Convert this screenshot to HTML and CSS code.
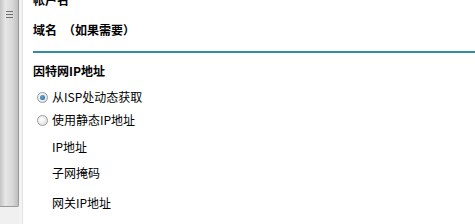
FILE: index.html
```html
<!DOCTYPE html>
<html lang="zh-CN">
<head>
    <meta charset="UTF-8">
    <title>WAN 设置</title>
    <link rel="stylesheet" href="styles.css">
</head>
<body>
    <div class="page">
        <div class="scrollbar">
            <div class="thumb">
                <div class="grip"></div>
            </div>
            <div class="track"></div>
        </div>
        <div class="gutter"></div>

        <div class="content">
            <div class="row label-bold">帐户名</div>
            <div class="row label-bold domain">域名　（如果需要）</div>
            <div class="divider"></div>

            <div class="row label-bold section">因特网IP地址</div>

            <label class="row radio-row first">
                <span class="radio checked"></span>
                <span>从ISP处动态获取</span>
            </label>
            <label class="row radio-row second">
                <span class="radio"></span>
                <span>使用静态IP地址</span>
            </label>

            <div class="row field f-ip">IP地址</div>
            <div class="row field f-mask">子网掩码</div>
            <div class="row field f-gw">网关IP地址</div>
        </div>
    </div>
</body>
</html>
```

FILE: styles.css
```css
* {
    margin: 0;
    padding: 0;
    box-sizing: border-box;
}

body {
    background: #ffffff;
    font-family: "Noto Sans CJK SC", "Liberation Sans", sans-serif;
    font-size: 12px;
    color: #000000;
    overflow: hidden;
    height: 224px;
}

.page {
    display: flex;
    height: 224px;
}

.scrollbar {
    width: 19px;
    display: flex;
    flex-direction: column;
}

.thumb {
    height: 207px;
    background: linear-gradient(to right, #c4c4c4 0%, #e6e6e6 30%, #d8d8d8 70%, #bdbdbd 100%);
    border-right: 1px solid #9a9a9a;
    border-bottom: 1px solid #9a9a9a;
    border-bottom-right-radius: 2px;
    padding-top: 11px;
    padding-left: 6px;
}

.grip {
    width: 7px;
    height: 7px;
    background: repeating-linear-gradient(to bottom, #707070 0, #707070 1px, transparent 1px, transparent 3px);
}

.track {
    flex: 1;
    background: #f0f0f0;
}

.gutter {
    width: 4px;
    background: #f3f3f3;
    border-right: 1px solid #e2e2e2;
}

.content {
    flex: 1;
    padding-left: 10px;
    margin-top: -10px;
}

.row {
    height: 20px;
    line-height: 20px;
    white-space: nowrap;
}

.label-bold {
    font-weight: bold;
}

.domain {
    margin-top: 10px;
}

.divider {
    height: 2px;
    background: #2f8ea6;
    margin-top: 11px;
}

.section {
    margin-top: 8px;
}

.radio-row {
    display: flex;
    align-items: center;
    padding-left: 4px;
}

.radio-row.first {
    margin-top: 6px;
}

.radio-row.second {
    margin-top: 3px;
}

.radio {
    width: 11px;
    height: 11px;
    border-radius: 50%;
    border: 1px solid #9c9c9c;
    background: radial-gradient(circle at 40% 40%, #ffffff 0%, #e4e4e4 70%, #cfcfcf 100%);
    margin-right: 4px;
    position: relative;
}

.radio.checked::after {
    content: "";
    position: absolute;
    left: 2px;
    top: 2px;
    width: 5px;
    height: 5px;
    border-radius: 50%;
    background: radial-gradient(circle at 40% 40%, #5fa8d8 0%, #1d5f9a 100%);
}

.field {
    padding-left: 19px;
}

.f-ip {
    margin-top: 7px;
}

.f-mask {
    margin-top: 6px;
}

.f-gw {
    margin-top: 10px;
}
```
